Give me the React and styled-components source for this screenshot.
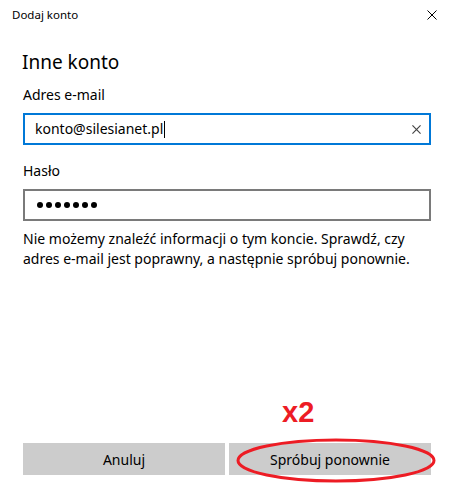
import React from "react"
import styled, { createGlobalStyle } from "styled-components"

const GlobalStyle = createGlobalStyle`
  html, body {
    margin: 0;
    padding: 0;
    background: #ffffff;
  }
  body {
    font-family: "Noto Sans", "Segoe UI", sans-serif;
    color: #000000;
  }
`

const CloseIcon = ({ size = 10, color = "#000", weight = 1 }) => (
  <svg width={size} height={size} viewBox="0 0 10 10">
    <path d="M0.5 0.5 L9.5 9.5 M9.5 0.5 L0.5 9.5" stroke={color} strokeWidth={weight} />
  </svg>
)

const App = () => {
  return (
    <Window>
      <GlobalStyle />
      <Header>
        <WindowTitle>Dodaj konto</WindowTitle>
        <CloseButton>
          <CloseIcon />
        </CloseButton>
      </Header>
      <Body>
        <Heading>Inne konto</Heading>
        <Label>Adres e-mail</Label>
        <Field focused>
          <FieldText>
            konto@silesianet.pl
            <Caret />
          </FieldText>
          <ClearButton>
            <CloseIcon size={9} color="#444" weight={1.3} />
          </ClearButton>
        </Field>
        <Label spaced>Hasło</Label>
        <Field>
          <Mask>
            {Array.from({ length: 7 }).map((_, i) => (
              <MaskDot key={i} />
            ))}
          </Mask>
        </Field>
        <ErrorText>
          Nie możemy znaleźć informacji o tym koncie. Sprawdź, czy adres e-mail
          jest poprawny, a następnie spróbuj ponownie.
        </ErrorText>
        <Footer>
          <Button>Anuluj</Button>
          <Button>
            Spróbuj ponownie
            <Note>x2</Note>
            <Circle viewBox="0 0 200 45" preserveAspectRatio="none">
              <ellipse cx="100" cy="22.5" rx="98" ry="20.5" fill="none" stroke="#ed1c24" strokeWidth="3" />
            </Circle>
          </Button>
        </Footer>
      </Body>
    </Window>
  )
}

export default App

const Window = styled.div`
  display: flex;
  flex-direction: column;
  width: 452px;
  height: 486px;
  box-sizing: border-box;
`

const Header = styled.header`
  display: flex;
  align-items: center;
  justify-content: space-between;
  height: 30px;
  padding: 0 15px 0 12px;
`

const WindowTitle = styled.div`
  font-size: 11.5px;
  line-height: 16px;
`

const CloseButton = styled.div`
  display: flex;
  width: 10px;
  height: 10px;
`

const Body = styled.main`
  display: flex;
  flex: 1;
  flex-direction: column;
  padding: 0 21px 11px 23px;
`

const Heading = styled.h1`
  margin: 18px 0 0 -1px;
  font-size: 19px;
  font-weight: 400;
  line-height: 28px;
`

const Label = styled.div`
  margin-top: ${({ spaced }) => (spaced ? 16 : 9)}px;
  font-size: 14px;
  line-height: 20px;
`

const Field = styled.div`
  display: flex;
  align-items: center;
  justify-content: space-between;
  height: 32px;
  margin-top: 8px;
  padding: 0 8px 0 10px;
  box-sizing: border-box;
  border: 2px solid ${({ focused }) => (focused ? "#0078d7" : "#7a7a7a")};
`

const FieldText = styled.div`
  display: flex;
  align-items: center;
  font-size: 14px;
  line-height: 20px;
`

const Caret = styled.span`
  width: 1px;
  height: 17px;
  margin-left: 1px;
  background: #000;
`

const ClearButton = styled.div`
  display: flex;
  width: 9px;
  height: 9px;
`

const Mask = styled.div`
  display: flex;
  gap: 3px;
  padding-left: 2px;
`

const MaskDot = styled.span`
  width: 6px;
  height: 6px;
  border-radius: 50%;
  background: #000;
`

const ErrorText = styled.p`
  margin: 8px 0 0;
  font-size: 14px;
  line-height: 20px;
`

const Footer = styled.footer`
  display: grid;
  grid-template-columns: 1fr 1fr;
  gap: 4px;
  margin-top: auto;
`

const Button = styled.div`
  position: relative;
  display: flex;
  align-items: center;
  justify-content: center;
  height: 32px;
  background: #cccccc;
  font-size: 14px;
`

const Note = styled.span`
  position: absolute;
  left: 53px;
  top: -47px;
  font-family: "Liberation Sans", Arial, sans-serif;
  font-size: 29px;
  font-weight: 700;
  color: #ed1c24;
`

const Circle = styled.svg`
  position: absolute;
  left: 7px;
  top: -5px;
  width: 200px;
  height: 45px;
  overflow: visible;
`
